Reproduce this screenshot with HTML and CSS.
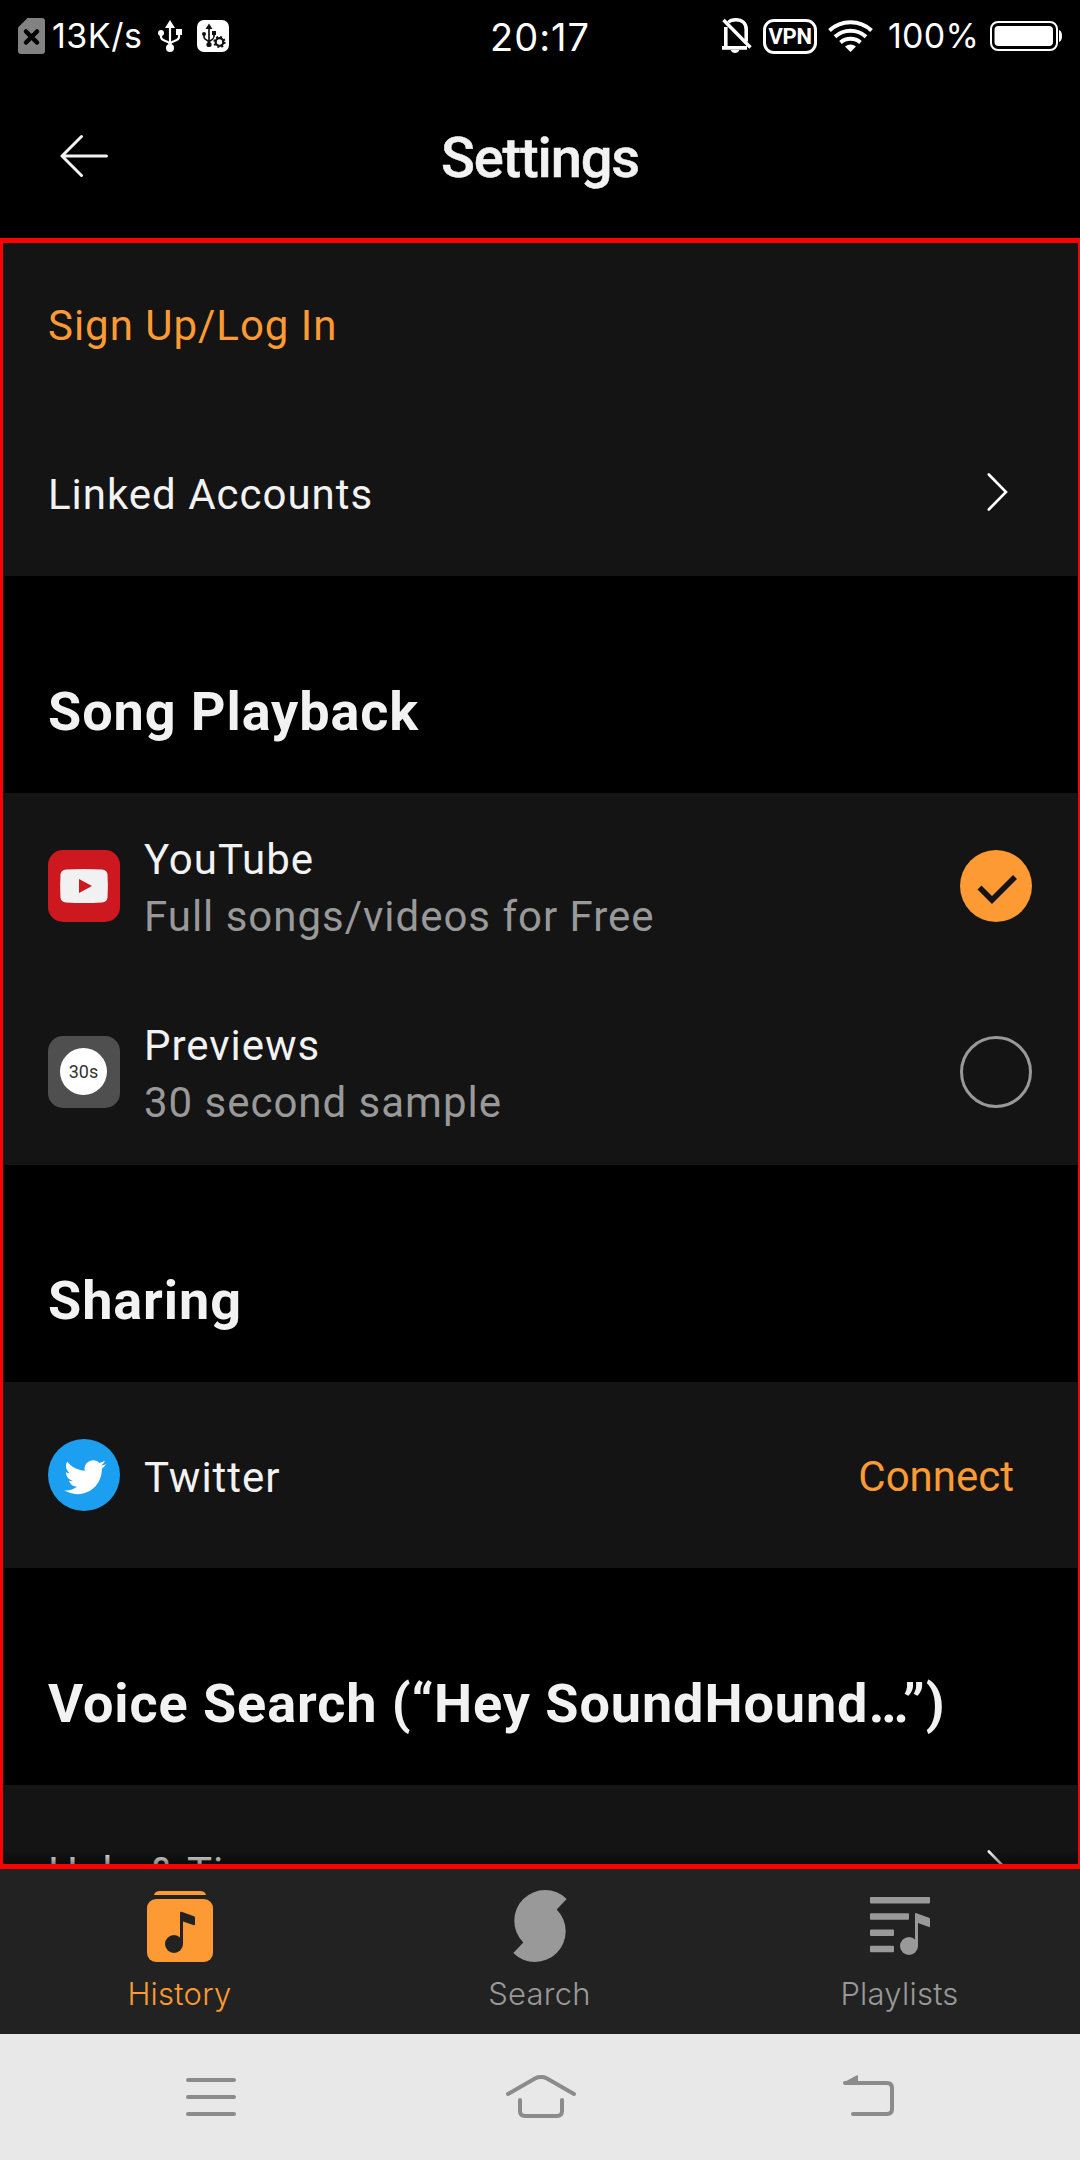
FILE: index.html
```html
<!DOCTYPE html>
<html lang="en">
<head>
<meta charset="utf-8">
<title>Settings</title>
<link rel="stylesheet" href="styles.css">
</head>
<body>
<div class="phone">
  <div class="status">
    <div class="status-left">
      <svg class="sim" width="27" height="36" viewBox="0 0 27 36"><path d="M9.5 0H24a3 3 0 0 1 3 3v30a3 3 0 0 1-3 3H3a3 3 0 0 1-3-3V9.5z" fill="#828282"/><path d="M8 13.500l11 11M19 13.500l-11 11" stroke="#000" stroke-width="4.500" stroke-linecap="round"/></svg>
      <span class="speed">13K/s</span>
      <svg class="usb" width="24" height="32" viewBox="0 0 24 32"><g fill="none" stroke="#fff" stroke-width="2.200"><path d="M12 6v22M3 13v4c0 5 9 3 9 8M21 12v5c0 5-9 3-9 8"/></g><path d="M12 0l5 8H7zM18 9h6v6h-6z" fill="#fff"/><circle cx="3" cy="13" r="3" fill="#fff"/><circle cx="12" cy="28" r="4" fill="#fff"/></svg>
      <svg class="usb-gear" width="32" height="32" viewBox="0 0 32 32"><rect width="32" height="32" rx="7" fill="#fff"/><g fill="none" stroke="#111" stroke-width="1.700"><path d="M12 6v19M7 14v3c0 4 5 2 5 6M17 13v4c0 4-5 2-5 6"/></g><path d="M12 3.500l3.500 5.500h-7zM15 11h4v4h-4z" fill="#111"/><circle cx="7" cy="14" r="2" fill="#111"/><circle cx="12" cy="24.500" r="2.600" fill="#111"/><circle cx="22.500" cy="22" r="6.800" fill="#fff"/><circle cx="22.500" cy="22" r="3.800" fill="none" stroke="#111" stroke-width="2.200"/><circle cx="22.500" cy="22" r="5.200" fill="none" stroke="#111" stroke-width="1.800" stroke-dasharray="2 2.084"/></svg>
    </div>
    <div class="clock">20:17</div>
    <div class="status-right">
      <svg class="bell" width="31" height="36" viewBox="0 0 31 36"><path d="M7.500 4.500C9 2.500 11.500 1.800 15 1.800c6 0 10.200 3.700 10.200 9.700v12M4.800 9v21M1 29.900h25" fill="none" stroke="#fff" stroke-width="3.600"/><path d="M2.500 2L29.500 29.500" stroke="#fff" stroke-width="3.400"/><path d="M9.500 32h9c-1 2-2.500 3-4.500 3s-3.500-1-4.500-3z" fill="#fff"/></svg>
      <span class="vpn">VPN</span>
      <svg class="wifi" width="45" height="33" viewBox="0 0 45 33"><g fill="none" stroke="#fff" stroke-width="4"><path d="M1.500 10.500a31 31 0 0 1 42 0"/><path d="M7 16.800a23 23 0 0 1 31 0"/><path d="M12.500 22.500a15.500 15.500 0 0 1 20 0"/></g><path d="M17 26.500q5.500-4.200 11 0L22.500 32z" fill="#fff"/></svg>
      <span class="percent">100%</span>
      <svg class="battery" width="72" height="30" viewBox="0 0 72 30"><rect x="1" y="1" width="66" height="28" rx="7" fill="none" stroke="#fff" stroke-width="2"/><rect x="4.500" y="5" width="58.500" height="20" rx="4" fill="#fff"/><path d="M69 9q3 1 3 6t-3 6z" fill="#fff"/></svg>
    </div>
  </div>

  <header class="header">
    <svg class="back" width="50" height="44" viewBox="0 0 50 44"><path d="M21.500 2.500L2 22l19.500 19.500M2 22h44.500" fill="none" stroke="#f2f2f2" stroke-width="3" stroke-linecap="round" stroke-linejoin="round"/></svg>
    <h1 class="title">Settings</h1>
  </header>

  <main class="list">
    <section class="group">
      <div class="row single first"><span class="label accent">Sign Up/Log In</span></div>
      <div class="row single"><span class="label">Linked Accounts</span>
        <svg class="chevron" width="21" height="40" viewBox="0 0 21 40"><path d="M1.800 2.500L19 20 1.800 37.500" fill="none" stroke="#fff" stroke-width="2.600" stroke-linecap="round"/></svg></div>
    </section>
    <h2 class="heading">Song Playback</h2>
    <section class="group">
      <div class="row service">
        <svg class="logo" width="72" height="72" viewBox="0 0 72 72"><rect width="72" height="72" rx="15" fill="#cd181f"/><path d="M18 19.500q18-1 36 0 5 .3 5.500 5 .8 11.500 0 23-.5 4.700-5.500 5-18 1-36 0-5-.3-5.500-5-.8-11.500 0-23 .5-4.700 5.500-5z" fill="#f1f1f1"/><path d="M31 29l13 7-13 7z" fill="#cd181f"/></svg>
        <div class="texts"><span class="label">YouTube</span><span class="label muted">Full songs/videos for Free</span></div>
        <svg class="radio" width="72" height="72" viewBox="0 0 72 72"><circle cx="36" cy="36" r="36" fill="#fd9a33"/><path d="M19.500 37.500L32 50 55 27" fill="none" stroke="#141414" stroke-width="5.600"/></svg>
      </div>
      <div class="row service">
        <svg class="logo" width="72" height="72" viewBox="0 0 72 72"><rect width="72" height="72" rx="15" fill="#4f4f4f"/><circle cx="35.500" cy="35.500" r="23.500" fill="#fff"/><text class="badge" x="35.500" y="42" text-anchor="middle">30s</text></svg>
        <div class="texts"><span class="label">Previews</span><span class="label muted">30 second sample</span></div>
        <svg class="radio" width="72" height="72" viewBox="0 0 72 72"><circle cx="36" cy="36" r="34.500" fill="none" stroke="#999" stroke-width="3"/></svg>
      </div>
    </section>
    <h2 class="heading">Sharing</h2>
    <section class="group">
      <div class="row service">
        <svg class="logo" width="72" height="72" viewBox="0 0 72 72"><circle cx="36" cy="36" r="36" fill="#1d9ff1"/><g transform="translate(16.300 17.300) scale(1.740)"><path d="M23.954 4.569c-.885.389-1.830.654-2.825.775 1.014-.611 1.794-1.574 2.163-2.723-.951.555-2.005.959-3.127 1.184-.896-.959-2.173-1.559-3.591-1.559-2.717 0-4.920 2.203-4.920 4.917 0 .39.045.765.127 1.124C7.691 8.094 4.066 6.130 1.640 3.161c-.427.722-.666 1.561-.666 2.475 0 1.710.87 3.213 2.188 4.096-.807-.026-1.566-.248-2.228-.616v.061c0 2.385 1.693 4.374 3.946 4.827-.413.111-.849.171-1.296.171-.314 0-.615-.03-.916-.086.631 1.953 2.445 3.377 4.604 3.417-1.680 1.319-3.809 2.105-6.102 2.105-.39 0-.779-.023-1.170-.067 2.189 1.394 4.768 2.209 7.557 2.209 9.054 0 13.999-7.496 13.999-13.986 0-.209 0-.42-.015-.63.961-.689 1.800-1.560 2.460-2.548z" fill="#fff"/></g></svg>
        <div class="texts one"><span class="label">Twitter</span></div>
        <span class="connect">Connect</span>
      </div>
    </section>
    <h2 class="heading">Voice Search (“Hey SoundHound…”)</h2>
    <section class="group">
      <div class="row single last"><span class="label">Help &amp; Tips</span>
        <svg class="chevron" width="21" height="40" viewBox="0 0 21 40"><path d="M1.800 2.500L19 20 1.800 37.500" fill="none" stroke="#fff" stroke-width="2.600" stroke-linecap="round"/></svg></div>
    </section>
  </main>

  <nav class="tabs">
    <div class="tab active">
      <svg width="72" height="72" viewBox="0 0 72 72"><path d="M10 5q1-4 6-4h40q5 0 6 4z" fill="currentColor"/><rect x="3" y="9" width="66" height="63" rx="9" fill="currentColor"/><path d="M36 22.500q0-1 1.500-.8l12.500 4.600q1 .4 1 1.500v6.500q0 1.200-1 1L39 31.500V54h-3z" fill="#222"/><circle cx="30" cy="54" r="9" fill="#222"/></svg>
      <span>History</span>
    </div>
    <div class="tab">
      <svg width="72" height="72" viewBox="504 1890 72 72"><path d="M566.700 1899A30.700 30.700 0 0 0 523.300 1942.500L513.300 1953A30.700 30.700 0 0 0 556.700 1909.500Z" fill="currentColor"/></svg>
      <span>Search</span>
    </div>
    <div class="tab">
      <svg width="72" height="72" viewBox="864 1890 72 72"><g fill="currentColor"><rect x="870" y="1897" width="60" height="6.500" rx="1"/><rect x="870" y="1913.300" width="39" height="6.500" rx="1"/><rect x="870" y="1929.500" width="24" height="6.500" rx="1"/><rect x="870" y="1945.800" width="24" height="6.500" rx="1"/><path d="M915 1914q0-1.200 1.500-.8l12.500 4.600q1 .4 1 1.500v7q0 1.200-1 .8L918 1923v23h-3z"/><circle cx="909" cy="1946" r="9"/></g></svg>
      <span>Playlists</span>
    </div>
  </nav>

  <div class="sysnav">
    <svg width="50" height="44" viewBox="186 2075 50 44"><path d="M188 2080h46M188 2097h46M188 2114h46" stroke="#8b8b8b" stroke-width="4" stroke-linecap="round"/></svg>
    <svg class="home" width="74" height="44" viewBox="504 2075 74 44"><path d="M508 2094l27-15.500q6-3.200 12 0l27 15.500M520 2100v11q0 5 5 5h32q5 0 5-5v-11" fill="none" stroke="#8b8b8b" stroke-width="4" stroke-linecap="round"/></svg>
    <svg width="52" height="44" viewBox="842 2075 52 44"><path d="M845 2083h42q5 0 5 5v21q0 5-5 5h-34" fill="none" stroke="#8b8b8b" stroke-width="4" stroke-linecap="round"/><path d="M843.500 2082.500l13-7q1.500-.6 1.500 1v8h-13z" fill="#8b8b8b"/></svg>
  </div>
</div>
</body>
</html>
```

FILE: styles.css
```css
* { box-sizing: border-box; }
body { margin: 0; background: #000; }
svg { display: block; flex: none; }
.phone {
  width: 1080px;
  height: 2160px;
  display: flex;
  flex-direction: column;
  overflow: hidden;
  background: #000;
  color: #f2f2f2;
  font-family: Roboto, sans-serif;
}

.status {
  height: 72px;
  flex: none;
  display: grid;
  grid-template-columns: 1fr auto 1fr;
  align-items: center;
  padding: 0 18px;
  color: #fff;
  font: 34px/68px Inter, sans-serif;
  white-space: nowrap;
}
.status-left, .status-right { display: flex; align-items: center; }
.status-right { justify-content: flex-end; }
.speed { margin-left: 7px; width: 106px; padding-bottom: 0; letter-spacing: 0.500px; }
.usb-gear { margin-left: 15px; }
.clock { font-size: 38px; letter-spacing: 0.940px; padding-top: 1px; }
.bell { margin-right: 11px; }
.vpn {
  width: 54px;
  height: 35px;
  border: 3px solid #fff;
  border-radius: 11px;
  font: 700 22px/30px Roboto, sans-serif;
  text-align: center;
  letter-spacing: -0.300px;
}
.wifi { margin: 0 15px 0 11px; }
.percent { margin-right: 11px; letter-spacing: 0.200px; }

.header {
  height: 166px;
  flex: none;
  display: grid;
  grid-template-columns: 1fr auto 1fr;
  align-items: center;
  padding: 2px 60px 0;
}
.title { margin: 0; padding-top: 4px; font-size: 56px; font-weight: 500; letter-spacing: -1.150px; line-height: 70px; -webkit-text-stroke: 0.500px #f2f2f2; }

.list {
  height: 1631px;
  flex: none;
  overflow: hidden;
  position: relative;
  border: solid #f00;
  border-width: 5px 2px 5px 3px;
}
.list::after {
  content: "";
  position: absolute;
  inset: auto 0 0;
  height: 14px;
  background: linear-gradient(rgba(0, 0, 0, 0), rgba(0, 0, 0, .45));
}
.group { background: #141414; }
.group:first-child { margin-top: -3px; }
.row { display: flex; align-items: center; padding: 0 46px 0 45px; }
.single { height: 168px; justify-content: space-between; padding-right: 70px; }
.single .label { padding-top: 5px; }
.first .label { padding-top: 3px; }
.last .label { padding-top: 7px; }
.service { height: 186px; }
.label { font-size: 42px; line-height: 57px; letter-spacing: 0.980px; white-space: nowrap; }
.accent, .connect { color: #fd9a33; }
.muted { color: #999; }
.texts { flex: 1; display: flex; flex-direction: column; margin-left: 24px; padding-top: 4px; }
.texts.one { padding-top: 5px; }
.connect { font-size: 42px; line-height: 57px; padding-top: 2px; margin-right: 18px; }
.badge { font-size: 18px; fill: #333; }
.heading {
  height: 217px;
  margin: 0;
  padding: 104px 45px 0;
  font-size: 54px;
  font-weight: 700;
  line-height: 64px;
  letter-spacing: 0.900px;
  white-space: nowrap;
}

.tabs {
  height: 165px;
  flex: none;
  display: grid;
  grid-template-columns: repeat(3, 1fr);
  background: #222;
  color: #999;
  font: 300 31px/40px Inter, sans-serif;
  letter-spacing: 0.250px;
}
.tab { display: flex; flex-direction: column; align-items: center; gap: 12px; padding-top: 21px; }
.tab span { margin-right: 1px; }
.active { color: #fd9a33; }

.sysnav {
  height: 126px;
  flex: none;
  display: flex;
  justify-content: space-between;
  padding: 41px 186px 0;
  background: #e8e8e8;
}
.home { margin-left: 3px; }
```
